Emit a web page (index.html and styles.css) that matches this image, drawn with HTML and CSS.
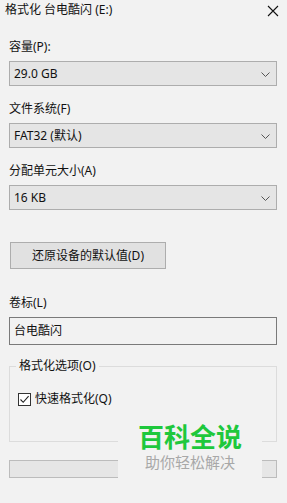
FILE: index.html
```html
<!DOCTYPE html>
<html lang="zh-CN">
  <head>
    <meta charset="UTF-8" />
    <title>格式化 台电酷闪 (E:)</title>
    <link rel="stylesheet" href="styles.css">
  </head>
  <body>
    <div class="titlebar">
      <span class="title-text">格式化 台电酷闪 (E:)</span>
      <svg class="close" width="12" height="12" viewBox="0 0 12 12">
        <path d="M1 1 L11 11 M11 1 L1 11" stroke="#111" stroke-width="1.1" fill="none" />
      </svg>
    </div>

    <div class="form">
      <div class="label label-first">容量(P):</div>
      <div class="combo">
        <span>29.0 GB</span>
        <svg class="chev" width="9" height="5" viewBox="0 0 9 5"><path d="M0.5 0.5 L4.5 4.5 L8.5 0.5" stroke="#555" fill="none" /></svg>
      </div>

      <div class="label">文件系统(F)</div>
      <div class="combo">
        <span>FAT32 (默认)</span>
        <svg class="chev" width="9" height="5" viewBox="0 0 9 5"><path d="M0.5 0.5 L4.5 4.5 L8.5 0.5" stroke="#555" fill="none" /></svg>
      </div>

      <div class="label">分配单元大小(A)</div>
      <div class="combo">
        <span>16 KB</span>
        <svg class="chev" width="9" height="5" viewBox="0 0 9 5"><path d="M0.5 0.5 L4.5 4.5 L8.5 0.5" stroke="#555" fill="none" /></svg>
      </div>

      <div class="btn-row">
        <div class="btn">还原设备的默认值(D)</div>
      </div>

      <div class="label label-vol">卷标(L)</div>
      <div class="textbox">台电酷闪</div>

      <div class="group">
        <div class="legend">格式化选项(O)</div>
        <div class="check-row">
          <span class="checkbox">
            <svg width="11" height="11" viewBox="0 0 11 11"><path d="M1.5 5.5 L4.2 8.3 L9.6 2.2" stroke="#222" stroke-width="1.1" fill="none" /></svg>
          </span>
          <span>快速格式化(Q)</span>
        </div>
      </div>

      <div class="progress"></div>
    </div>

    <div class="watermark">
      <div class="wm-main">百科全说</div>
      <div class="wm-sub">助你轻松解决</div>
    </div>
  </body>
</html>
```

FILE: styles.css
```css
html,
body {
  margin: 0;
  padding: 0;
  width: 100%;
  height: 100%;
  background: #f2f2f2;
  overflow: hidden;
}
body {
  position: relative;
  font-family: "Noto Sans", "Noto Sans CJK SC", sans-serif;
  font-size: 12px;
  line-height: 16px;
  color: #111;
}
.titlebar {
  height: 18px;
  padding: 1px 8px 0 5px;
  display: flex;
  align-items: flex-start;
  justify-content: space-between;
}
.title-text {
  padding-top: 1px;
}
.close {
  margin-top: 4px;
}
.form {
  padding: 0 10px 0 9px;
  display: flex;
  flex-direction: column;
}
.label {
  margin-top: 15px;
  margin-bottom: 6px;
}
.label-first {
  margin-top: 20px;
}
.combo {
  height: 23px;
  border: 1px solid #adadad;
  background: #e5e5e5;
  display: flex;
  align-items: center;
  justify-content: space-between;
  padding: 0 6px 0 4px;
}
.chev {
  margin-top: 1px;
}
.btn-row {
  display: flex;
  margin-top: 32px;
  padding-left: 1px;
}
.btn {
  width: 154px;
  height: 25px;
  border: 1px solid #adadad;
  background: #e1e1e1;
  display: flex;
  align-items: center;
  justify-content: center;
}
.label-vol {
  margin-top: 26px;
}
.textbox {
  height: 26px;
  border: 1px solid #7a7a7a;
  background: #f2f2f2;
  padding-left: 4px;
  display: flex;
  align-items: center;
}
.group {
  margin-top: 21px;
  height: 74px;
  border: 1px solid #dcdcdc;
  position: relative;
  padding: 0 8px;
}
.legend {
  position: absolute;
  top: -9px;
  left: 6px;
  padding: 0 3px;
  background: #f2f2f2;
}
.check-row {
  margin-top: 24px;
  display: flex;
  align-items: center;
  gap: 4px;
}
.checkbox {
  width: 11px;
  height: 11px;
  border: 1px solid #333;
  display: flex;
  align-items: center;
  justify-content: center;
  background: #fff;
}
.progress {
  margin-top: 18px;
  height: 16px;
  border: 1px solid #bcbcbc;
  background: #e6e6e6;
}
.watermark {
  position: absolute;
  left: 118px;
  top: 418px;
  width: 144px;
  height: 66px;
  background: #f2f2f2;
  text-align: center;
  font-family: "Noto Sans CJK SC", sans-serif;
}
.wm-main {
  margin-top: 4px;
  font-size: 26px;
  line-height: 28px;
  font-weight: bold;
  color: #1ec83c;
}
.wm-sub {
  margin-top: 3px;
  font-size: 15px;
  line-height: 18px;
  color: #a8a8a8;
}
```
